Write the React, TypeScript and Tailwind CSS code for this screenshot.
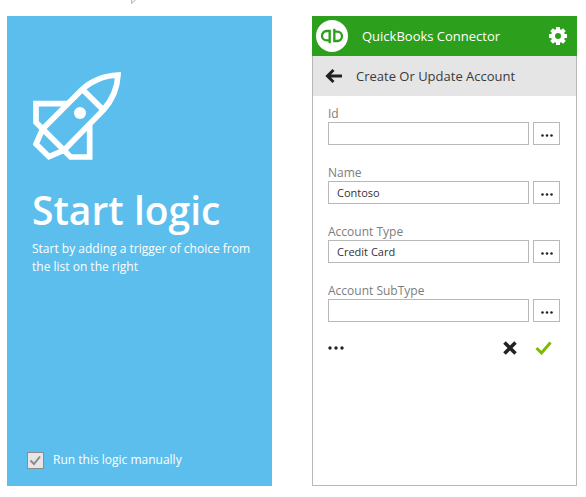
import { useState } from "react";

type FieldProps = {
  id: string;
  label: string;
  initial?: string;
};

function Dots({ className }: { className: string }) {
  return (
    <svg viewBox="0 0 16 4" className={className} fill="currentColor" aria-hidden="true">
      <circle cx="2" cy="2" r="1.7" />
      <circle cx="8" cy="2" r="1.7" />
      <circle cx="14" cy="2" r="1.7" />
    </svg>
  );
}

function Rocket() {
  return (
    <svg viewBox="39 36 264 264" className="size-[88px]" fill="none" stroke="#fff" strokeWidth="17" aria-hidden="true">
      <path d="M294 45C250 47 210 65 187 88L68 207L132 271L250 150C275 122 292 85 294 45Z" />
      <path d="M187 88L250 150" />
      <path d="M142 131H48V187L68 207" />
      <path d="M209 196V291H152L132 271" />
      <path d="M68 207L48 252L87 290L134 270" />
      <circle cx="180" cy="159" r="18" fill="#fff" stroke="none" />
    </svg>
  );
}

function QbLogo() {
  return (
    <svg viewBox="0 0 96 96" className="size-8" fill="none" stroke="#2ca01c" strokeWidth="7" aria-hidden="true">
      <circle cx="48" cy="48" r="48" fill="#fff" stroke="none" />
      <path d="M41 70V33H32A14 14 0 0 0 32 61H41" />
      <path d="M55 26V63H64A14 14 0 0 0 64 35H55" />
    </svg>
  );
}

function Gear() {
  return (
    <svg viewBox="0 0 18 18" className="size-[18px]" aria-hidden="true">
      <g fill="#fff">
        <rect x="7" y="0" width="4" height="18" rx="0.5" />
        <rect x="7" y="0" width="4" height="18" rx="0.5" transform="rotate(45 9 9)" />
        <rect x="7" y="0" width="4" height="18" rx="0.5" transform="rotate(90 9 9)" />
        <rect x="7" y="0" width="4" height="18" rx="0.5" transform="rotate(135 9 9)" />
        <circle cx="9" cy="9" r="7" />
      </g>
      <circle cx="9" cy="9" r="3" fill="#2ca01c" />
    </svg>
  );
}

function Field({ id, label, initial = "" }: FieldProps) {
  return (
    <div>
      <label htmlFor={id} className="block text-xs leading-4 text-[#7d7d7d]">
        {label}
      </label>
      <div className="flex gap-1">
        <input
          id={id}
          type="text"
          defaultValue={initial}
          className="h-[23px] min-w-0 flex-1 border border-[#b8b8b8] bg-white px-2 text-[11px] text-[#333] outline-none"
        />
        <button
          type="button"
          aria-label={`More options for ${label}`}
          className="flex h-[23px] w-[27px] items-center justify-center border border-[#b8b8b8] bg-white pt-1 text-[#222]"
        >
          <Dots className="h-[3px] w-3" />
        </button>
      </div>
    </div>
  );
}

function StartPanel() {
  const [manual, setManual] = useState(true);
  return (
    <section className="flex min-w-0 flex-col bg-[#5cbeec] px-5 pt-14 pb-[17px] text-white">
      <div className="pl-[5px]">
        <div className="px-px">
          <Rocket />
        </div>
        <h1 className="mt-5 text-[39px] leading-[60px] font-semibold whitespace-nowrap">Start logic</h1>
        <p className="text-xs leading-[18px]">Start by adding a trigger of choice from the list on the right</p>
      </div>
      <label className="mt-auto flex items-center gap-[9px] text-xs leading-[18px]">
        <span className="grid size-[17px]">
          <input
            type="checkbox"
            checked={manual}
            onChange={(e) => setManual(e.target.checked)}
            className="col-start-1 row-start-1 size-[17px] appearance-none border border-[#8c8c8c] bg-[#e6e6e6]"
          />
          {manual && (
            <svg
              viewBox="0 0 17 17"
              className="pointer-events-none col-start-1 row-start-1 size-[17px]"
              fill="none"
              stroke="#8a8a8a"
              strokeWidth="2"
              aria-hidden="true"
            >
              <path d="M3.5 8.5L7 12L13 4.5" />
            </svg>
          )}
        </span>
        Run this logic manually
      </label>
    </section>
  );
}

function ConnectorPanel() {
  return (
    <section className="flex min-w-0 flex-col">
      <header className="flex h-10 items-center bg-[#2ca01c] pr-[10px] pl-1 text-white">
        <QbLogo />
        <h2 className="ml-[14px] flex-1 text-[13px] leading-5 whitespace-nowrap">QuickBooks Connector</h2>
        <button type="button" aria-label="Settings">
          <Gear />
        </button>
      </header>
      <div className="flex flex-1 flex-col border border-t-0 border-[#b8b8b8]">
        <div className="flex h-10 items-center gap-[14px] bg-[#e5e5e5] pl-3 text-[#3a3a3a]">
          <button type="button" aria-label="Back">
            <svg viewBox="0 0 17 14" className="h-[14px] w-[17px]" fill="none" stroke="#222" strokeWidth="3" aria-hidden="true">
              <path d="M2 7H17M8.5 1L2.5 7L8.5 13" />
            </svg>
          </button>
          <h3 className="text-[13px] leading-5 whitespace-nowrap">Create Or Update Account</h3>
        </div>
        <form className="flex flex-col gap-5 pt-[10px] pr-4 pl-[15px]" onSubmit={(e) => e.preventDefault()}>
          <Field id="account-id" label="Id" />
          <Field id="account-name" label="Name" initial="Contoso" />
          <Field id="account-type" label="Account Type" initial="Credit Card" />
          <Field id="account-subtype" label="Account SubType" />
          <div className="-mt-1 flex h-5 items-center pr-2">
            <button type="button" aria-label="More" className="mr-auto text-[#222]">
              <Dots className="h-1 w-4" />
            </button>
            <button type="button" aria-label="Cancel" className="mr-[18px]">
              <svg viewBox="0 0 14 14" className="size-[14px]" stroke="#222" strokeWidth="3.6" aria-hidden="true">
                <path d="M1.5 1.5L12.5 12.5M12.5 1.5L1.5 12.5" />
              </svg>
            </button>
            <button type="submit" aria-label="Save">
              <svg viewBox="0 0 17 14" className="h-[14px] w-[17px]" fill="none" stroke="#7fba00" strokeWidth="3" aria-hidden="true">
                <path d="M1.5 7L6.5 12L15.5 1.5" />
              </svg>
            </button>
          </div>
        </form>
      </div>
    </section>
  );
}

export default function App() {
  return (
    <main className="relative grid min-h-screen grid-cols-2 gap-10 bg-white pt-4 pr-[9px] pb-[11px] pl-[7px] font-['Open_Sans','Noto_Sans',sans-serif]">
      <svg viewBox="0 0 8 5" className="absolute top-0 left-[130px] h-[5px] w-2" fill="#f4f4f8" stroke="#b4b4bf" aria-hidden="true">
        <path d="M1.5 -1V3.5L6 -0.5" />
      </svg>
      <StartPanel />
      <ConnectorPanel />
    </main>
  );
}
